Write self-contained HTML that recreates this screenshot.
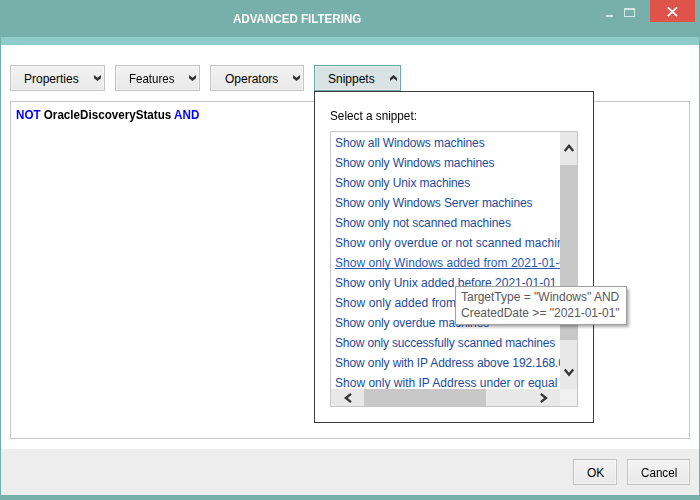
<!DOCTYPE html>
<html><head><meta charset="utf-8">
<style>
*{margin:0;padding:0;box-sizing:border-box}
html,body{width:700px;height:500px;overflow:hidden;background:#fff}
body{position:relative;font-family:"Liberation Sans",sans-serif;font-size:12px;color:#000}
.a{position:absolute}
.t{position:absolute;white-space:nowrap;line-height:16px}
.btn{position:absolute;border:1px solid #c4c4c4;background:linear-gradient(#f2f2f2,#e9e9e9);box-shadow:inset 0 0 0 1px rgba(255,255,255,0.45)}
.chev{position:absolute}
</style></head><body>
<!-- window frame -->
<div class="a" style="left:0;top:0;width:700px;height:500px;background:#77afab"></div>
<div class="a" style="left:1px;top:37px;width:698px;height:8px;background:#8fcdcc"></div>
<div class="a" style="left:1px;top:45px;width:698px;height:404px;background:#fff"></div>
<div class="a" style="left:1px;top:449px;width:698px;height:46px;background:#ededed"></div>

<!-- title -->
<div class="t" style="left:233px;top:11px;color:#fff;font-weight:bold;font-size:12.5px;transform:scaleX(0.927);transform-origin:0 0">ADVANCED FILTERING</div>
<!-- min / max / close -->
<div class="a" style="left:606px;top:15px;width:7px;height:2px;background:#d3e5e4"></div>
<div class="a" style="left:624px;top:8px;width:11px;height:9px;border:1px solid #d3e5e4;border-top-width:2px"></div>
<div class="a" style="left:650px;top:0;width:45px;height:22px;background:#e0534a"></div>
<svg class="a" style="left:650px;top:0" width="45" height="22"><path d="M17.8 7.4 L27 16.1 M27 7.4 L17.8 16.1" stroke="#fff" stroke-width="1.9" fill="none"/></svg>

<!-- toolbar buttons -->
<div class="btn" style="left:10px;top:65px;width:95px;height:26px"></div>
<div class="t" style="left:24px;top:71px">Properties</div>

<div class="btn" style="left:115px;top:65px;width:85px;height:26px"></div>
<div class="t" style="left:129px;top:71px;transform:scaleX(0.96);transform-origin:0 0">Features</div>

<div class="btn" style="left:210px;top:65px;width:94px;height:26px"></div>
<div class="t" style="left:225px;top:71px">Operators</div>

<div class="a" style="left:314px;top:65px;width:87px;height:26px;border:1px solid #6ea9a6;background:#d9e3e3;box-shadow:inset 0 0 0 1px #e4eaea"></div>
<div class="t" style="left:328px;top:71px">Snippets</div>

<!-- editor -->
<div class="a" style="left:10px;top:101px;width:680px;height:338px;border:1px solid #c6c6c6;background:#fff"></div>
<div class="t" style="left:16px;top:107px;font-weight:bold;transform:scaleX(0.97);transform-origin:0 0"><span style="color:#0000ff">NOT</span> OracleDiscoveryStatus <span style="color:#0000ff">AND</span></div>

<!-- popup -->
<div class="a" style="left:314px;top:91px;width:280px;height:332px;border:1px solid #3a3a3a;background:#fff"></div>
<div class="t" style="left:330px;top:108px;transform:scaleX(0.98);transform-origin:0 0">Select a snippet:</div>
<div class="a" style="left:330px;top:131px;width:248px;height:276px;border:1px solid #c6c6c6;background:#fff;overflow:hidden">
  <div class="a" style="left:0;top:0;width:229px;height:257px;overflow:hidden;color:#1c4b9c;letter-spacing:-0.1px">
    <div class="t" style="left:4px;top:3px">Show all Windows machines</div>
    <div class="t" style="left:4px;top:23px">Show only Windows machines</div>
    <div class="t" style="left:4px;top:43px">Show only Unix machines</div>
    <div class="t" style="left:4px;top:63px">Show only Windows Server machines</div>
    <div class="t" style="left:4px;top:83px">Show only not scanned machines</div>
    <div class="t" style="left:4px;top:103px;letter-spacing:0.05px">Show only overdue or not scanned machines</div>
    <div class="t" style="left:4px;top:123px;letter-spacing:0.04px;text-decoration:underline;text-decoration-skip-ink:none;color:#2a5bb5">Show only Windows added from 2021-01-01</div>
    <div class="t" style="left:4px;top:143px;letter-spacing:0">Show only Unix added before 2021-01-01</div>
    <div class="t" style="left:4px;top:163px;letter-spacing:0.08px">Show only added from 2021-01-01</div>
    <div class="t" style="left:4px;top:183px">Show only overdue machines</div>
    <div class="t" style="left:4px;top:203px;letter-spacing:-0.17px">Show only successfully scanned machines</div>
    <div class="t" style="left:4px;top:223px">Show only with IP Address above 192.168.0.1</div>
    <div class="t" style="left:4px;top:243px;letter-spacing:0.01px">Show only with IP Address under or equal to 192.168.0.1</div>
  </div>
  <!-- vertical scrollbar -->
  <div class="a" style="left:229px;top:0;width:17px;height:257px;background:#e8e8e8"></div>
  <div class="a" style="left:229px;top:33px;width:17px;height:175px;background:#c8c8c8"></div>
  <!-- horizontal scrollbar -->
  <div class="a" style="left:0;top:257px;width:229px;height:17px;background:#e8e8e8"></div>
  <div class="a" style="left:33px;top:257px;width:122px;height:17px;background:#c8c8c8"></div>
  <div class="a" style="left:229px;top:257px;width:17px;height:17px;background:#f0f0f0"></div>
</div>

<!-- icon overlay -->
<svg class="a" style="left:0;top:0" width="700" height="500" fill="#333">
  <path d="M94 75 L97.5 77.8 L101 75 L101 78.2 L97.5 80.9 L94 78.2 Z"/>
  <path d="M189 75 L192.5 77.8 L196 75 L196 78.2 L192.5 80.9 L189 78.2 Z"/>
  <path d="M293 75 L296.5 77.8 L300 75 L300 78.2 L296.5 80.9 L293 78.2 Z"/>
  <path d="M390 78 L393.5 75 L397 78 L397 80.9 L393.5 78.3 L390 80.9 Z"/>
  <path d="M564.8 151 L569 145.8 L573.2 151" stroke="#333" stroke-width="2.3" fill="none"/>
  <path d="M564.8 369.5 L569 374.7 L573.2 369.5" stroke="#333" stroke-width="2.3" fill="none"/>
  <path d="M351 393.8 L345.8 398 L351 402.2" stroke="#333" stroke-width="2.3" fill="none"/>
  <path d="M540.8 393.8 L546 398 L540.8 402.2" stroke="#333" stroke-width="2.3" fill="none"/>
</svg>

<!-- tooltip -->
<div class="a" style="left:457px;top:289px;width:172px;height:38px;background:rgba(0,0,0,0.33);filter:blur(1.5px)"></div>
<div class="a" style="left:455px;top:286px;width:172px;height:39px;border:1px solid #a0a0a0;background:#fff"></div>
<div class="t" style="left:461px;top:289px;color:#575757">TargetType = "Windows" AND</div>
<div class="t" style="left:461px;top:305px;color:#575757">CreatedDate &gt;= "2021-01-01"</div>

<!-- footer buttons -->
<div class="btn" style="left:573px;top:459px;width:44px;height:26px;border-color:#c2c2c2"></div>
<div class="t" style="left:587px;top:465px">OK</div>
<div class="btn" style="left:627px;top:459px;width:63px;height:26px;border-color:#c2c2c2"></div>
<div class="t" style="left:641px;top:465px;transform:scaleX(0.97);transform-origin:0 0">Cancel</div>
</body></html>
